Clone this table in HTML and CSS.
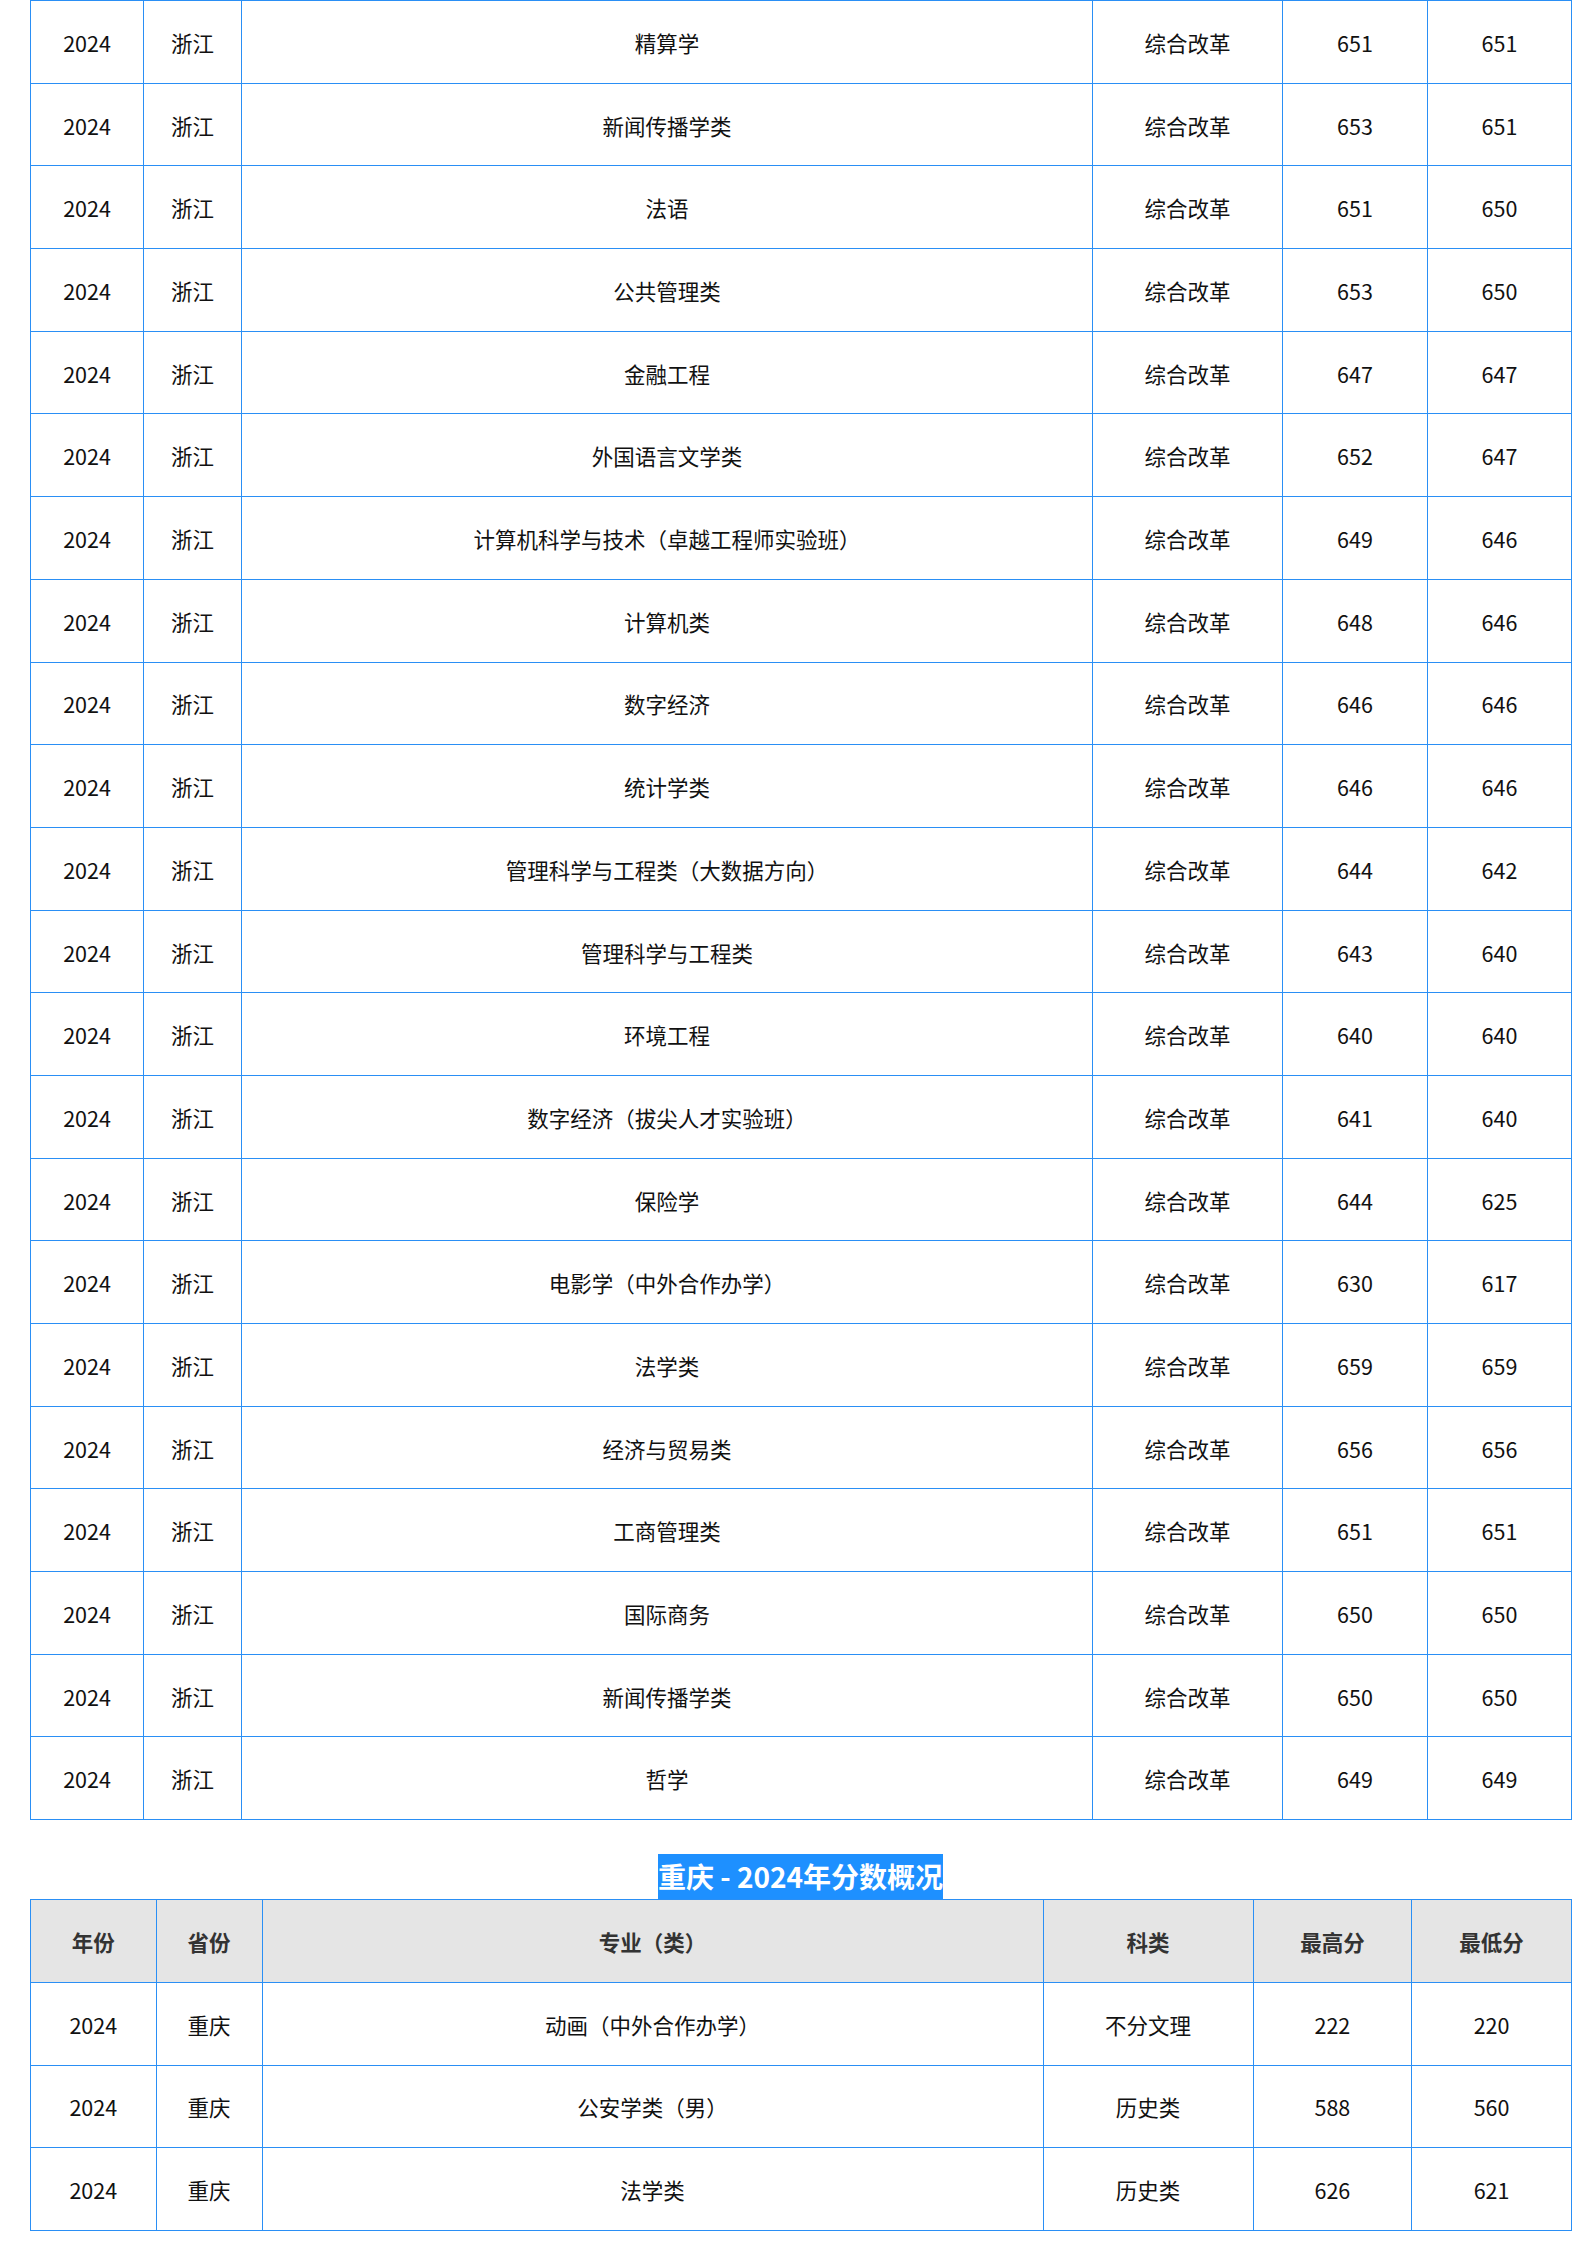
FILE: index.html
```html
<!DOCTYPE html>
<html lang="zh-CN">
<head>
<meta charset="utf-8">
<title>分数概况</title>
<link rel="stylesheet" href="styles.css">
</head>
<body>
<div class="page">
  <table class="score-table first">
    <colgroup>
      <col class="c1"><col class="c2"><col class="c3"><col class="c4"><col class="c5"><col class="c6">
    </colgroup>
    <tbody>
      <tr><td>2024</td><td>浙江</td><td>精算学</td><td>综合改革</td><td>651</td><td>651</td></tr>
      <tr><td>2024</td><td>浙江</td><td>新闻传播学类</td><td>综合改革</td><td>653</td><td>651</td></tr>
      <tr><td>2024</td><td>浙江</td><td>法语</td><td>综合改革</td><td>651</td><td>650</td></tr>
      <tr><td>2024</td><td>浙江</td><td>公共管理类</td><td>综合改革</td><td>653</td><td>650</td></tr>
      <tr><td>2024</td><td>浙江</td><td>金融工程</td><td>综合改革</td><td>647</td><td>647</td></tr>
      <tr><td>2024</td><td>浙江</td><td>外国语言文学类</td><td>综合改革</td><td>652</td><td>647</td></tr>
      <tr><td>2024</td><td>浙江</td><td>计算机科学与技术（卓越工程师实验班）</td><td>综合改革</td><td>649</td><td>646</td></tr>
      <tr><td>2024</td><td>浙江</td><td>计算机类</td><td>综合改革</td><td>648</td><td>646</td></tr>
      <tr><td>2024</td><td>浙江</td><td>数字经济</td><td>综合改革</td><td>646</td><td>646</td></tr>
      <tr><td>2024</td><td>浙江</td><td>统计学类</td><td>综合改革</td><td>646</td><td>646</td></tr>
      <tr><td>2024</td><td>浙江</td><td>管理科学与工程类（大数据方向）</td><td>综合改革</td><td>644</td><td>642</td></tr>
      <tr><td>2024</td><td>浙江</td><td>管理科学与工程类</td><td>综合改革</td><td>643</td><td>640</td></tr>
      <tr><td>2024</td><td>浙江</td><td>环境工程</td><td>综合改革</td><td>640</td><td>640</td></tr>
      <tr><td>2024</td><td>浙江</td><td>数字经济（拔尖人才实验班）</td><td>综合改革</td><td>641</td><td>640</td></tr>
      <tr><td>2024</td><td>浙江</td><td>保险学</td><td>综合改革</td><td>644</td><td>625</td></tr>
      <tr><td>2024</td><td>浙江</td><td>电影学（中外合作办学）</td><td>综合改革</td><td>630</td><td>617</td></tr>
      <tr><td>2024</td><td>浙江</td><td>法学类</td><td>综合改革</td><td>659</td><td>659</td></tr>
      <tr><td>2024</td><td>浙江</td><td>经济与贸易类</td><td>综合改革</td><td>656</td><td>656</td></tr>
      <tr><td>2024</td><td>浙江</td><td>工商管理类</td><td>综合改革</td><td>651</td><td>651</td></tr>
      <tr><td>2024</td><td>浙江</td><td>国际商务</td><td>综合改革</td><td>650</td><td>650</td></tr>
      <tr><td>2024</td><td>浙江</td><td>新闻传播学类</td><td>综合改革</td><td>650</td><td>650</td></tr>
      <tr><td>2024</td><td>浙江</td><td>哲学</td><td>综合改革</td><td>649</td><td>649</td></tr>
    </tbody>
  </table>

  <h3 class="section-title"><span class="title-mark">重庆 - 2024年分数概况</span></h3>

  <table class="score-table second">
    <colgroup>
      <col class="d1"><col class="d2"><col class="d3"><col class="d4"><col class="d5"><col class="d6">
    </colgroup>
    <thead>
      <tr><th>年份</th><th>省份</th><th>专业（类）</th><th>科类</th><th>最高分</th><th>最低分</th></tr>
    </thead>
    <tbody>
      <tr><td>2024</td><td>重庆</td><td>动画（中外合作办学）</td><td>不分文理</td><td>222</td><td>220</td></tr>
      <tr><td>2024</td><td>重庆</td><td>公安学类（男）</td><td>历史类</td><td>588</td><td>560</td></tr>
      <tr><td>2024</td><td>重庆</td><td>法学类</td><td>历史类</td><td>626</td><td>621</td></tr>
    </tbody>
  </table>
</div>
</body>
</html>
```

FILE: styles.css
```css
html, body {
  margin: 0;
  padding: 0;
  background: #ffffff;
}

body {
  font-family: "Noto Sans CJK SC", "Noto Sans", sans-serif;
  color: #111111;
}

.page {
  padding-left: 30px;
  width: 1541px;
}

.score-table {
  width: 1541px;
  border-collapse: collapse;
  table-layout: fixed;
  font-size: 21.5px;
}

.score-table td,
.score-table th {
  border: 1px solid #2a8ff5;
  padding: 2px 0 0 0;
  height: 79.7px;
  text-align: center;
  vertical-align: middle;
  line-height: 1.2;
}

.score-table th {
  background: #e5e5e5;
  color: #333333;
  font-weight: bold;
}

.first .c1 { width: 113px; }
.first .c2 { width: 98px; }
.first .c3 { width: 851px; }
.first .c4 { width: 190px; }
.first .c5 { width: 145px; }
.first .c6 { width: 144px; }

.second .d1 { width: 125.6px; }
.second .d2 { width: 106px; }
.second .d3 { width: 781px; }
.second .d4 { width: 210px; }
.second .d5 { width: 158.6px; }
.second .d6 { width: 159.8px; }

.section-title {
  margin: 34px 0 0 0;
  padding: 0;
  text-align: center;
  font-size: 28px;
  font-weight: bold;
  line-height: 45px;
  height: 45px;
}

.title-mark {
  display: inline-block;
  background: #1e90ff;
  color: #ffffff;
  vertical-align: top;
}
```
